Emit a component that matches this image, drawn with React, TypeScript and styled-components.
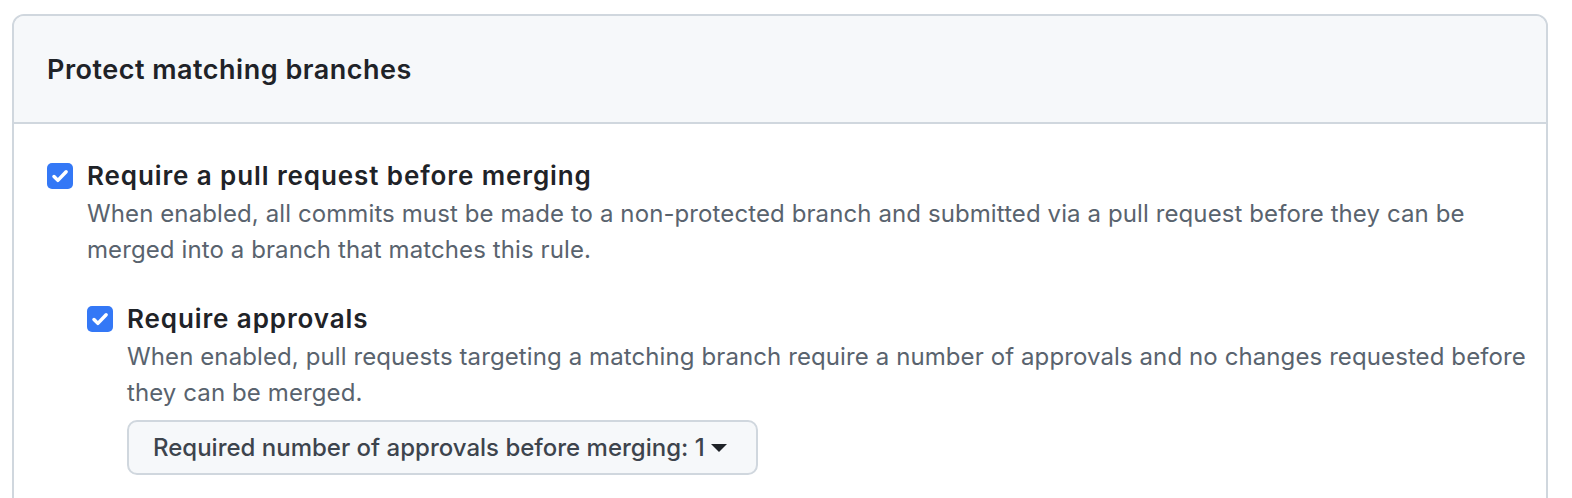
import styled, { createGlobalStyle } from 'styled-components'

const GlobalStyle = createGlobalStyle`
	body {
		margin: 0;
		background: #ffffff;
		font-family: Inter, "Noto Sans", "Liberation Sans", sans-serif;
		-webkit-font-smoothing: antialiased;
	}
`

const Page = styled.div`
	padding: 14px 24px 0 12px;
	height: 498px;
	box-sizing: border-box;
	overflow: hidden;
`

const Box = styled.div`
	border: 2px solid #d0d7de;
	border-radius: 12px;
	overflow: hidden;
`

const BoxHeader = styled.div`
	background: #f6f8fa;
	border-bottom: 2px solid #d0d7de;
	height: 106px;
	padding: 0 33px;
	display: flex;
	align-items: center;
`

const HeaderTitle = styled.h3`
	margin: 0;
	font-size: 27px;
	font-weight: 600;
	letter-spacing: 0.5px;
	color: #1f2328;
`

const BoxBody = styled.div`
	padding: 38px 0 120px 33px;
`

const Option = styled.div<{ $nested?: boolean }>`
	display: flex;
	gap: 14px;
	margin-top: ${(p) => (p.$nested ? '37px' : '0')};
`

const Check = styled.span`
	flex: none;
	width: 26px;
	height: 26px;
	border-radius: 5px;
	background: #3478f6;
	display: flex;
	align-items: center;
	justify-content: center;
	margin-top: 1px;
`

const OptionBody = styled.div`
	display: flex;
	flex-direction: column;
	flex: 1;
`

const OptionTitle = styled.div`
	font-size: 26px;
	font-weight: 600;
	letter-spacing: 0.9px;
	color: #1f2328;
	line-height: 28px;
`

const Note = styled.p`
	margin: 6px 0 0;
	font-size: 24px;
	letter-spacing: 0.1px;
	line-height: 36px;
	color: #59636e;
`

const SelectButton = styled.button`
	align-self: flex-start;
	margin-top: 9px;
	height: 55px;
	padding: 0 29px 0 24px;
	display: flex;
	align-items: center;
	gap: 6px;
	background: #f6f8fa;
	border: 2px solid #d0d7de;
	border-radius: 10px;
	font-family: inherit;
	font-size: 24px;
	font-weight: 500;
	color: #3d444d;
	cursor: pointer;
`

const Caret = styled.span`
	width: 0;
	height: 0;
	border-left: 8px solid transparent;
	border-right: 8px solid transparent;
	border-top: 8px solid #1f2328;
`

const CheckMark = () => (
	<Check>
		<svg width="20" height="20" viewBox="0 0 16 16">
			<path d="M3.2 8.4l3.1 3.1L12.9 4.6" fill="none" stroke="#fff" strokeWidth="2.8" strokeLinecap="round" strokeLinejoin="round" />
		</svg>
	</Check>
)

export default function App() {
	return (
		<Page>
			<GlobalStyle />
			<Box>
				<BoxHeader>
					<HeaderTitle>Protect matching branches</HeaderTitle>
				</BoxHeader>
				<BoxBody>
					<Option>
						<CheckMark />
						<OptionBody>
							<OptionTitle>Require a pull request before merging</OptionTitle>
							<Note>
								When enabled, all commits must be made to a non-protected branch and submitted via a pull request before they can be
								merged into a branch that matches this rule.
							</Note>
							<Option $nested>
								<CheckMark />
								<OptionBody>
									<OptionTitle>Require approvals</OptionTitle>
									<Note>
										When enabled, pull requests targeting a matching branch require a number of approvals and no changes requested before
										they can be merged.
									</Note>
									<SelectButton>
										Required number of approvals before merging: 1
										<Caret />
									</SelectButton>
								</OptionBody>
							</Option>
						</OptionBody>
					</Option>
				</BoxBody>
			</Box>
		</Page>
	)
}
